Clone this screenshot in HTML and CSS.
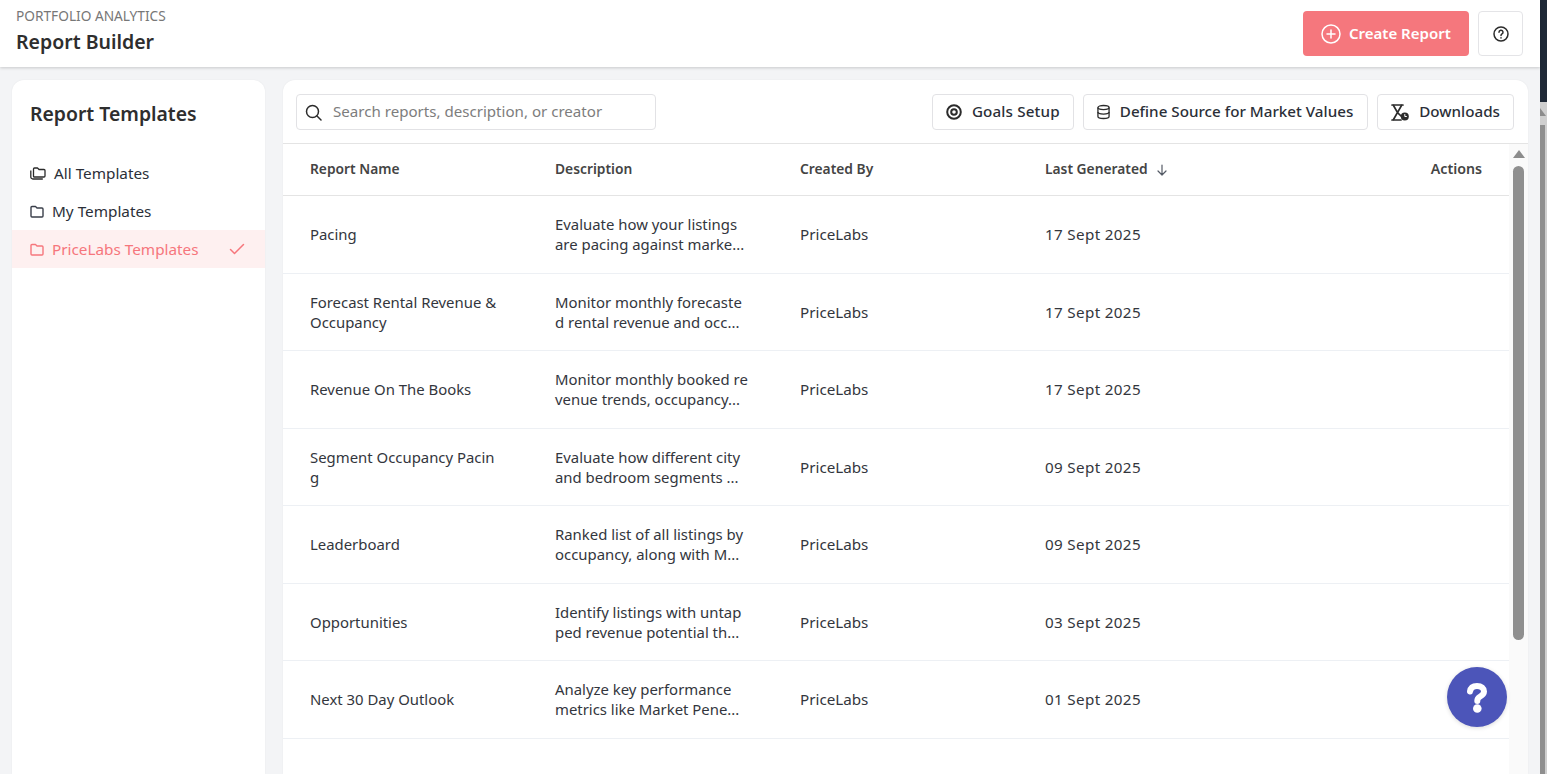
FILE: index.html
```html
<!DOCTYPE html>
<html lang="en">
<head>
  <meta charset="UTF-8">
  <title>Report Builder</title>
  <link rel="stylesheet" href="styles.css">
</head>
<body>

  <div class="app">
    <header class="topo">
      <div class="topo-titulo">
        <div class="topo-sub">PORTFOLIO ANALYTICS</div>
        <h1>Report Builder</h1>
      </div>
      <div class="topo-acoes">
        <button class="btn-criar">
          <svg width="20" height="20" viewBox="0 0 20 20" fill="none" stroke="#fff" stroke-width="1.5" stroke-linecap="round"><circle cx="10" cy="10" r="9"/><path d="M10 6v8M6 10h8"/></svg>
          <span class="btn-texto">Create Report</span>
        </button>
        <button class="btn-ajuda">
          <svg width="16" height="16" viewBox="0 0 16 16" fill="none" stroke="#2b2b2b" stroke-width="1.5" stroke-linecap="round"><circle cx="8" cy="8" r="7"/><path d="M6 6.2a2 2 0 1 1 3 1.7c-.7.4-1 .8-1 1.5"/><path d="M8 11.8v.1"/></svg>
        </button>
      </div>
    </header>

    <div class="conteudo">
      <aside class="lateral">
        <h2>Report Templates</h2>
        <ul class="menu">
          <li class="menu-item">
            <svg width="16" height="13" viewBox="0 0 16 13" fill="none" stroke="#2b2b2b" stroke-width="1.3" stroke-linejoin="round"><path d="M3.500 9.500V2a1 1 0 0 1 1-1h3l1.500 1.500h5a1 1 0 0 1 1 1V9a1 1 0 0 1-1 1H4a.5.5 0 0 1-.5-.5z"/><path d="M.8 3.500V10a2 2 0 0 0 2 2h10"/></svg>
            All Templates
          </li>
          <li class="menu-item">
            <svg width="14" height="13" viewBox="0 0 14 13" fill="none" stroke="#3a3f4a" stroke-width="1.4" stroke-linejoin="round"><path d="M1 2.500a1 1 0 0 1 1-1h3.500L7 3h5a1 1 0 0 1 1 1v7a1 1 0 0 1-1 1H2a1 1 0 0 1-1-1z"/></svg>
            My Templates
          </li>
          <li class="menu-item ativo">
            <svg width="14" height="13" viewBox="0 0 14 13" fill="none" stroke="#f6767c" stroke-width="1.4" stroke-linejoin="round"><path d="M1 2.500a1 1 0 0 1 1-1h3.500L7 3h5a1 1 0 0 1 1 1v7a1 1 0 0 1-1 1H2a1 1 0 0 1-1-1z"/></svg>
            <span class="menu-nome">PriceLabs Templates</span>
            <svg width="16" height="12" viewBox="0 0 16 12" fill="none" stroke="#f6767c" stroke-width="1.5" stroke-linecap="round" stroke-linejoin="round"><path d="M1.500 6.500l4 4L14.500 1.500"/></svg>
          </li>
        </ul>
      </aside>

      <main class="painel">
        <div class="barra">
          <label class="busca">
            <svg width="17" height="17" viewBox="0 0 17 17" fill="none" stroke="#2b2b2b" stroke-width="1.5" stroke-linecap="round"><circle cx="7.500" cy="7.500" r="6"/><path d="M12 12l4 4"/></svg>
            <input type="text" placeholder="Search reports, description, or creator">
          </label>
          <div class="barra-botoes">
            <button class="btn-claro btn-metas">
              <svg width="16" height="16" viewBox="0 0 16 16" fill="none" stroke="#2b2b2b" stroke-width="2"><circle cx="8" cy="8" r="6.800"/><circle cx="8" cy="8" r="2.800"/></svg>
              <span class="btn-texto">Goals Setup</span>
            </button>
            <button class="btn-claro btn-fonte">
              <svg width="13" height="16" viewBox="0 0 14 16" fill="none" stroke="#2b2b2b" stroke-width="1.400"><ellipse cx="7" cy="3.200" rx="6" ry="2.200"/><path d="M1 3.200v9.600c0 1.200 2.700 2.200 6 2.200s6-1 6-2.200V3.200"/><path d="M1 8c0 1.200 2.700 2.200 6 2.200S13 9.200 13 8"/></svg>
              <span class="btn-texto">Define Source for Market Values</span>
            </button>
            <button class="btn-claro">
              <svg width="18" height="17" viewBox="0 0 18 17" fill="none" stroke="#2b2b2b" stroke-width="1.700" stroke-linecap="round"><path d="M1 1h11M1 16h9"/><path d="M2.500 1.500l4 7-4 7M10.500 1.500l-4 7 3.500 3.500"/><circle cx="13.800" cy="12.500" r="4" fill="#2b2b2b" stroke="none"/><path d="M13.800 10.500v2h1.600" stroke="#fff" stroke-width="1"/></svg>
              <span class="btn-texto">Downloads</span>
            </button>
          </div>
        </div>

        <div class="tabela-area">
          <div class="tabela-rolagem">
            <table class="tabela">
              <thead>
                <tr>
                  <th class="col-nome">Report Name</th>
                  <th class="col-desc">Description</th>
                  <th class="col-autor">Created By</th>
                  <th class="col-data">Last Generated
                    <svg class="seta-ordem" width="10" height="12" viewBox="0 0 10 12" fill="none" stroke="#555b66" stroke-width="1.200" stroke-linecap="round" stroke-linejoin="round"><path d="M5 1v10M1 7l4 4 4-4"/></svg>
                  </th>
                  <th class="col-acoes">Actions</th>
                </tr>
              </thead>
              <tbody>
                <tr>
                  <td class="cel-texto">Pacing</td>
                  <td class="cel-texto">Evaluate how your listings<br>are pacing against marke...</td>
                  <td>PriceLabs</td>
                  <td class="cel-data">17 Sept 2025</td>
                  <td></td>
                </tr>
                <tr>
                  <td class="cel-texto">Forecast Rental Revenue &amp;<br>Occupancy</td>
                  <td class="cel-texto">Monitor monthly forecaste<br>d rental revenue and occ...</td>
                  <td>PriceLabs</td>
                  <td class="cel-data">17 Sept 2025</td>
                  <td></td>
                </tr>
                <tr>
                  <td class="cel-texto">Revenue On The Books</td>
                  <td class="cel-texto">Monitor monthly booked re<br>venue trends, occupancy...</td>
                  <td>PriceLabs</td>
                  <td class="cel-data">17 Sept 2025</td>
                  <td></td>
                </tr>
                <tr>
                  <td class="cel-texto">Segment Occupancy Pacin<br>g</td>
                  <td class="cel-texto">Evaluate how different city<br>and bedroom segments ...</td>
                  <td>PriceLabs</td>
                  <td class="cel-data">09 Sept 2025</td>
                  <td></td>
                </tr>
                <tr>
                  <td class="cel-texto">Leaderboard</td>
                  <td class="cel-texto">Ranked list of all listings by<br>occupancy, along with M...</td>
                  <td>PriceLabs</td>
                  <td class="cel-data">09 Sept 2025</td>
                  <td></td>
                </tr>
                <tr>
                  <td class="cel-texto">Opportunities</td>
                  <td class="cel-texto">Identify listings with untap<br>ped revenue potential th...</td>
                  <td>PriceLabs</td>
                  <td class="cel-data">03 Sept 2025</td>
                  <td></td>
                </tr>
                <tr>
                  <td class="cel-texto">Next 30 Day Outlook</td>
                  <td class="cel-texto">Analyze key performance<br>metrics like Market Pene...</td>
                  <td>PriceLabs</td>
                  <td class="cel-data">01 Sept 2025</td>
                  <td></td>
                </tr>
              </tbody>
            </table>
          </div>
          <div class="trilho">
            <span class="trilho-seta"></span>
            <span class="trilho-barra"></span>
          </div>
        </div>
      </main>
    </div>

    <button class="chat-ajuda">
      <svg width="60" height="60" viewBox="0 0 60 60" fill="none" stroke="#fff" stroke-width="6" stroke-linecap="round"><path d="M23 24.500C23.500 21 26 19 30 19c4.500 0 7 2.500 7 5.500 0 3-2.500 4.300-4.500 5.500-1.500.9-2.200 1.800-2.200 4"/><circle cx="30.300" cy="41.500" r="4.300" fill="#fff" stroke="none"/></svg>
    </button>
  </div>

  <div class="trilho-pagina">
    <span class="trilho-pagina-topo"></span>
    <span class="trilho-pagina-resto">
      <span class="pagina-seta"></span>
      <span class="pagina-barra"></span>
    </span>
  </div>

</body>
</html>
```

FILE: styles.css
```css
* {
  box-sizing: border-box;
}

html, body {
  height: 100%;
}

body {
  margin: 0;
  display: flex;
  height: 774px;
  overflow: hidden;
  background: #f3f4f6;
  font-family: "Noto Sans", sans-serif;
  color: #2b2f38;
}

button {
  font-family: inherit;
  cursor: pointer;
}

.btn-texto {
  padding-bottom: 2px;
}

.app {
  position: relative;
  flex: 1;
  min-width: 0;
  display: flex;
  flex-direction: column;
}

.topo {
  height: 67px;
  flex-shrink: 0;
  display: flex;
  justify-content: space-between;
  align-items: flex-start;
  padding: 8px 17px 0 16px;
  background: #fff;
  box-shadow: 0 1px 3px rgba(0, 0, 0, 0.18);
}

.topo-sub {
  font-size: 13.700px;
  line-height: 16px;
  color: #777;
}

h1 {
  margin: 6px 0 0;
  font-size: 19.500px;
  line-height: 24px;
  font-weight: 600;
  color: #2e2e2e;
}

.topo-acoes {
  display: flex;
  gap: 9px;
  margin-top: 3px;
}

.btn-criar {
  display: flex;
  align-items: center;
  gap: 8px;
  width: 166px;
  height: 45px;
  padding: 0 0 0 18px;
  border: none;
  border-radius: 4px;
  background: #f5777d;
  color: #fff;
  font-size: 15px;
  font-weight: 600;
}

.btn-ajuda {
  display: flex;
  align-items: center;
  justify-content: center;
  width: 45px;
  height: 45px;
  padding: 0;
  border: 1px solid #e4e4e7;
  border-radius: 4px;
  background: #fff;
}

.conteudo {
  flex: 1;
  min-height: 0;
  display: flex;
  gap: 18px;
  padding: 13px 12px 0;
}

.lateral {
  width: 253px;
  flex-shrink: 0;
  background: #fff;
  border-radius: 12px 12px 0 0;
  box-shadow: 0 0 2px rgba(0, 0, 0, 0.06);
}

h2 {
  margin: 0;
  padding: 21px 18px 0;
  font-size: 19.400px;
  line-height: 26px;
  font-weight: 600;
  color: #2e2e2e;
}

.menu {
  list-style: none;
  margin: 27px 0 0;
  padding: 0;
}

.menu-item {
  display: flex;
  align-items: center;
  gap: 8px;
  height: 38px;
  padding: 0 20px 0 18px;
  font-size: 15.300px;
  color: #2b2f38;
}

.menu-item.ativo {
  background: #fef0f0;
  color: #f6767c;
}

.menu-nome {
  flex: 1;
}

.painel {
  flex: 1;
  min-width: 0;
  display: flex;
  flex-direction: column;
  background: #fff;
  border-radius: 12px 12px 0 0;
  box-shadow: 0 0 2px rgba(0, 0, 0, 0.06);
}

.barra {
  height: 64px;
  flex-shrink: 0;
  display: flex;
  justify-content: space-between;
  align-items: flex-start;
  padding: 14px 14px 0 13px;
  border-bottom: 1px solid #e4e4e4;
}

.busca {
  display: flex;
  align-items: center;
  gap: 11px;
  width: 360px;
  height: 36px;
  padding: 0 8px;
  border: 1px solid #e2e2e5;
  border-radius: 4px;
}

.busca input {
  flex: 1;
  min-width: 0;
  border: none;
  outline: none;
  padding: 0 0 2px;
  font-family: inherit;
  font-size: 15.100px;
}

.busca input::placeholder {
  color: #7d7d7d;
}

.barra-botoes {
  display: flex;
  gap: 9px;
}

.btn-claro {
  display: flex;
  align-items: center;
  gap: 10px;
  height: 36px;
  padding: 0 13px;
  border: 1px solid #e2e2e5;
  border-radius: 4px;
  background: #fff;
  color: #2b2f38;
  font-size: 15.200px;
  font-weight: 500;
}

.btn-metas {
  letter-spacing: 0.15px;
}

.btn-fonte {
  padding-right: 14px;
}

.tabela-area {
  flex: 1;
  min-height: 0;
  display: flex;
}

.tabela-rolagem {
  flex: 1;
  min-width: 0;
  overflow: hidden;
}

.tabela {
  width: 100%;
  border-collapse: collapse;
  table-layout: fixed;
}

.tabela th {
  height: 51px;
  padding: 0 0 2px 27px;
  text-align: left;
  font-size: 13.800px;
  font-weight: 600;
  color: #444;
  border-bottom: 1px solid #e4e4e4;
}

.col-nome, .col-desc, .col-autor, .col-data {
  width: 245px;
}

.tabela th.col-acoes {
  padding: 0 27px 2px 0;
  text-align: right;
  font-size: 14.200px;
}

.seta-ordem {
  margin-left: 6px;
  vertical-align: -2px;
}

.tabela td {
  height: 77px;
  padding: 0 0 0 27px;
  font-size: 15.200px;
  line-height: 20px;
  color: #33363d;
  border-bottom: 1px solid #edf0f4;
}

.tabela tbody tr:nth-child(odd) td {
  height: 78px;
}

.tabela .cel-texto {
  font-size: 14.900px;
}

.tabela .cel-data {
  letter-spacing: 0.35px;
}

.trilho {
  width: 19px;
  flex-shrink: 0;
  display: flex;
  flex-direction: column;
  align-items: center;
  background: #fafafa;
}

.trilho-seta {
  margin: 6px 0 8px;
  border-left: 6.500px solid transparent;
  border-right: 6.500px solid transparent;
  border-bottom: 8px solid #8c8c8c;
}

.trilho-barra {
  width: 11px;
  height: 474px;
  border-radius: 6px;
  background: #8f8f8f;
}

.chat-ajuda {
  position: absolute;
  left: 1447px;
  top: 667px;
  width: 60px;
  height: 60px;
  padding: 0;
  border: none;
  border-radius: 50%;
  background: #4c55b9;
  box-shadow: 0 1px 4px rgba(0, 0, 0, 0.15);
}

.chat-ajuda svg {
  display: block;
}

.trilho-pagina {
  width: 7px;
  flex-shrink: 0;
  display: flex;
  flex-direction: column;
}

.trilho-pagina-topo {
  height: 102px;
  background: #1f2937;
}

.trilho-pagina-resto {
  flex: 1;
  display: flex;
  flex-direction: column;
  background: #cfcfcf;
}

.pagina-seta {
  margin-top: 6px;
  width: 0;
  border-right: 6px solid transparent;
  border-bottom: 8px solid #8c8c8c;
}

.pagina-barra {
  flex: 1;
  margin: 9px 2px 0 0;
  background: #8f8f8f;
}
```
